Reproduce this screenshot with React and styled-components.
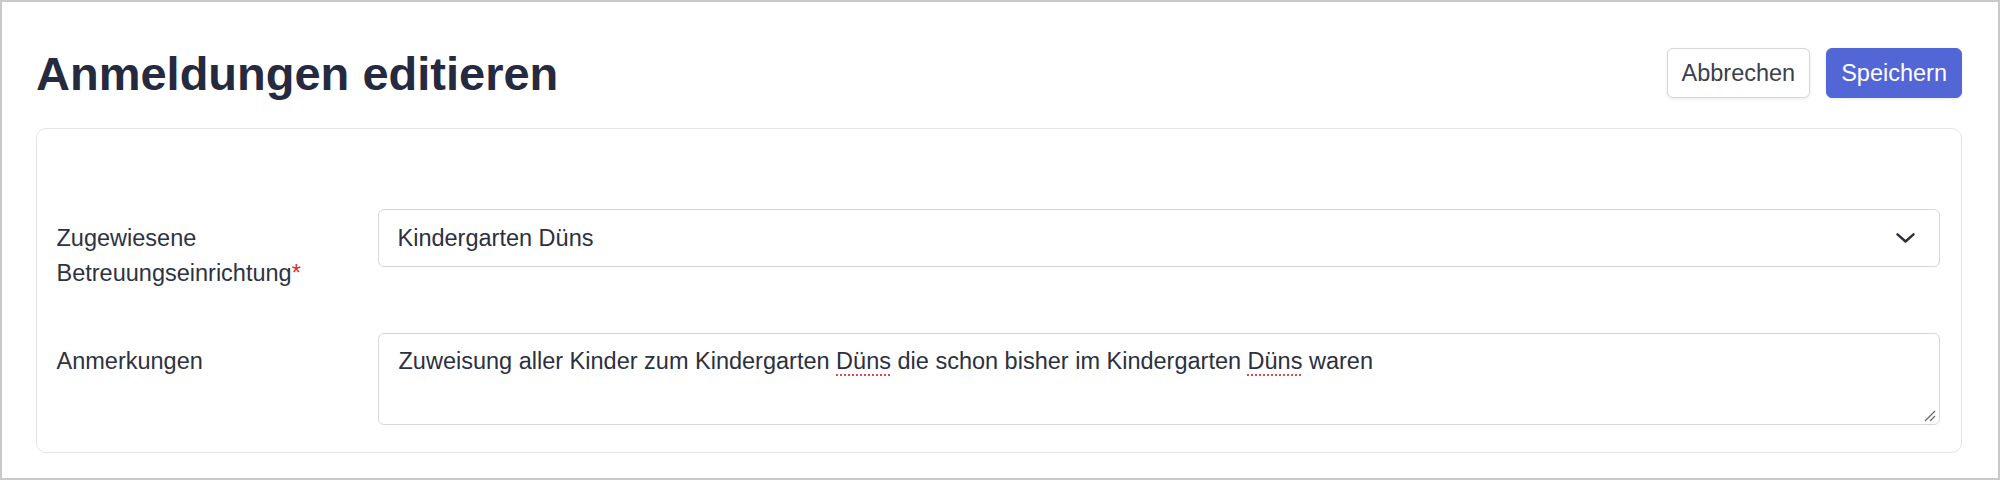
import React from 'react';
import styled, { createGlobalStyle } from 'styled-components';

const GlobalStyle = createGlobalStyle`
  html, body {
    margin: 0;
    padding: 0;
    background: #fff;
  }
  body {
    font-family: "Liberation Sans", Arial, Helvetica, sans-serif;
    color: #2c3040;
  }
  * {
    box-sizing: border-box;
  }
`;

function App() {
    return (
        <>
            <GlobalStyle />
            <Frame>
                <Header>
                    <Title>Anmeldungen editieren</Title>
                    <Actions>
                        <Button>Abbrechen</Button>
                        <Button primary>Speichern</Button>
                    </Actions>
                </Header>
                <Card>
                    <FormGrid>
                        <Label htmlFor="einrichtung">
                            Zugewiesene<br />
                            Betreuungseinrichtung<Required>*</Required>
                        </Label>
                        <SelectWrap>
                            <Select id="einrichtung" defaultValue="duens">
                                <option value="duens">Kindergarten Düns</option>
                            </Select>
                            <Chevron viewBox="0 0 19 10">
                                <path d="M1.5 1.3 L9.5 8.5 L17.5 1.3" />
                            </Chevron>
                        </SelectWrap>

                        <Label>Anmerkungen</Label>
                        <NoteBox role="textbox" aria-multiline="true">
                            Zuweisung aller Kinder zum Kindergarten <Misspelled>Düns</Misspelled> die schon bisher im Kindergarten <Misspelled>Düns</Misspelled> waren
                            <Grip viewBox="0 0 12 12">
                                <path d="M1 11 L11 1 M6 11 L11 6" />
                            </Grip>
                        </NoteBox>
                    </FormGrid>
                </Card>
            </Frame>
        </>
    )
}

export default App;

const Frame = styled.div`
    width: 2000px;
    height: 480px;
    border: 2px solid #c9c9c9;
    padding: 42.5px 36px 0 34px;
    background: #fff;
`

const Header = styled.div`
    height: 57px;
    display: flex;
    align-items: center;
    justify-content: space-between;
    margin-bottom: 26.5px;
`

const Title = styled.h1`
    margin: 0;
    font-size: 47px;
    line-height: 57px;
    font-weight: 700;
    color: #262a3f;
`

const Actions = styled.div`
    display: flex;
    align-items: center;
    gap: 16px;
`

const Button = styled.button`
    height: 50px;
    padding: 0 14px;
    border-radius: 6px;
    font-family: inherit;
    font-size: 23.5px;
    cursor: pointer;
    border: 1.5px solid ${props => props.primary ? '#5366d6' : '#d3d6de'};
    background: ${props => props.primary ? '#5366d6' : '#fff'};
    color: ${props => props.primary ? '#fff' : '#3b3f4c'};
    box-shadow: 0 1px 3px rgba(40, 50, 90, 0.1);
`

const Card = styled.div`
    border: 1.5px solid #e3e5e9;
    border-radius: 10px;
    padding: 80px 21px 27px 19.5px;
`

const FormGrid = styled.div`
    display: grid;
    grid-template-columns: 301px 1fr;
    column-gap: 20px;
    row-gap: 42px;
`

const Label = styled.label`
    padding-top: 11.5px;
    font-size: 23.5px;
    line-height: 35px;
    color: #2e3242;
`

const Required = styled.span`
    color: #e02d1b;
`

const SelectWrap = styled.div`
    position: relative;
    align-self: start;
`

const Select = styled.select`
    display: block;
    width: 100%;
    height: 58px;
    padding: 0 60px 0 19px;
    appearance: none;
    border: 1.5px solid #d5d7dc;
    border-radius: 6px;
    background: #fff;
    font-family: inherit;
    font-size: 23.5px;
    line-height: 35px;
    color: #2c3040;
`

const Chevron = styled.svg`
    position: absolute;
    right: 25px;
    top: 24px;
    width: 19px;
    height: 10px;
    fill: none;
    stroke: #2b2f3a;
    stroke-width: 2.4;
    stroke-linecap: round;
    stroke-linejoin: round;
    pointer-events: none;
`

const NoteBox = styled.div`
    position: relative;
    height: 92.5px;
    padding: 10.5px 20px;
    border: 1.5px solid #d5d7dc;
    border-radius: 6px;
    font-size: 23.5px;
    line-height: 35px;
    color: #2c3040;
`

const Misspelled = styled.span`
    text-decoration: underline dotted #e0484a;
    text-decoration-thickness: 2px;
    text-underline-offset: 5px;
`

const Grip = styled.svg`
    position: absolute;
    right: 3px;
    bottom: 2px;
    width: 12px;
    height: 12px;
    stroke: #6b6b6b;
    stroke-width: 1.3;
    fill: none;
`
